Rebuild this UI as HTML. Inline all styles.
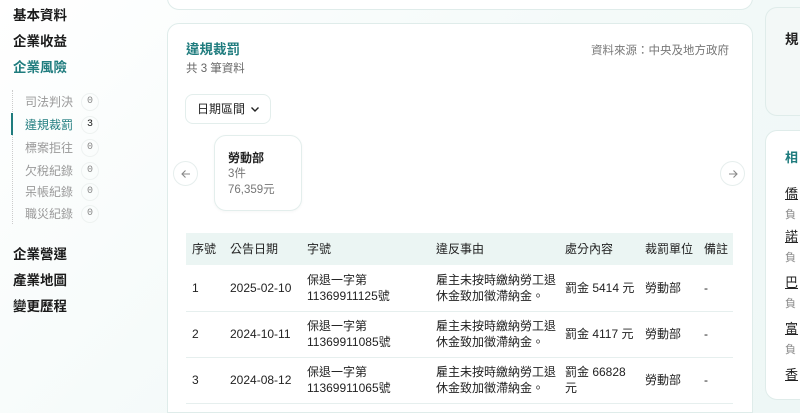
<!DOCTYPE html>
<html style="width:800px;height:413px;overflow:hidden"><head><meta charset="utf-8"><style>
*{margin:0;padding:0;box-sizing:border-box}
body{width:800px;height:413px;overflow:hidden;font-family:"Liberation Sans","Noto Sans CJK TC",sans-serif;background:linear-gradient(135deg,#fff 0%,#f4faf9 50%,#eef7f6 100%);position:relative;color:#222}
.a{position:absolute}
.nav{font-size:13.5px;font-weight:bold;color:#1a1a1a;left:13px;line-height:16px}
.sub{left:25px;font-size:12px;color:#999;line-height:14px}
.cnt{position:absolute;left:56px;top:-2px;width:18px;height:18px;border-radius:9px;border:1px solid #eef2f1;font-size:10px;text-align:center;line-height:16px;color:#888;font-family:"Liberation Mono",monospace}
.card{background:#fff;border:1px solid #dfecea;border-radius:12px}
table{border-collapse:collapse;font-size:12px;color:#222}
td,th{text-align:left;font-weight:normal;padding:0 0 0 6px;vertical-align:middle;line-height:16px}
th{height:32px;background:#ebf5f3}
td{height:46px;border-bottom:1px solid #e6efee}
</style></head><body>
<div class="a nav" style="top:8px">基本資料</div>
<div class="a nav" style="top:34px">企業收益</div>
<div class="a nav" style="top:60px;color:#1f7c7e">企業風險</div>
<div class="a" style="left:12px;top:90px;width:1px;height:134px;border-left:1px dotted #ccc"></div>
<div class="a" style="left:11px;top:113px;width:2px;height:22px;background:#1f7c7e"></div>
<div class="a sub" style="top:95px">司法判決<span class="cnt">0</span></div>
<div class="a sub" style="top:118px;color:#1f7c7e">違規裁罰<span class="cnt" style="color:#222">3</span></div>
<div class="a sub" style="top:141px">標案拒往<span class="cnt">0</span></div>
<div class="a sub" style="top:164px">欠稅紀錄<span class="cnt">0</span></div>
<div class="a sub" style="top:185px">呆帳紀錄<span class="cnt">0</span></div>
<div class="a sub" style="top:207px">職災紀錄<span class="cnt">0</span></div>
<div class="a nav" style="top:247px">企業營運</div>
<div class="a nav" style="top:273px">產業地圖</div>
<div class="a nav" style="top:299px">變更歷程</div>

<div class="a card" style="left:167px;top:-20px;width:586px;height:30px"></div>
<div class="a card" style="left:167px;top:23px;width:586px;height:390px;border-bottom-left-radius:0;border-bottom-right-radius:0"></div>
<div class="a" style="left:186px;top:42px;font-size:13.5px;font-weight:bold;color:#1f7c7e;line-height:16px">違規裁罰</div>
<div class="a" style="left:186px;top:62px;font-size:11.5px;color:#666;line-height:14px">共 3 筆資料</div>
<div class="a" style="left:591px;top:44px;font-size:11.5px;color:#777;line-height:14px">資料來源：中央及地方政府</div>
<div class="a" style="left:185px;top:94px;width:86px;height:30px;border:1px solid #e3eeec;border-radius:8px;font-size:12px;padding:7px 0 0 11px;line-height:15px">日期區間
<svg class="a" style="left:64px;top:11px" width="10" height="7" viewBox="0 0 10 7"><path d="M1.5 1.5L5 5l3.5-3.5" fill="none" stroke="#222" stroke-width="1.4"/></svg></div>
<div class="a" style="left:214px;top:135px;width:88px;height:76px;border:1px solid #e3eeec;border-radius:12px;background:#fff;box-shadow:0 1px 3px rgba(0,0,0,.04)"></div>
<div class="a" style="left:228px;top:151px;font-size:12px;font-weight:bold;line-height:14px">勞動部</div>
<div class="a" style="left:228px;top:167px;font-size:11.5px;color:#777;line-height:14px">3件</div>
<div class="a" style="left:228px;top:183px;font-size:11.5px;color:#777;line-height:14px">76,359元</div>
<div class="a" style="left:173px;top:161px;width:25px;height:25px;border-radius:13px;border:1px solid #e6eeed;background:#fff"><svg class="a" style="left:7px;top:7px" width="10" height="10" viewBox="0 0 10 10"><path d="M9 5H1M4.5 1.5L1 5l3.5 3.5" fill="none" stroke="#888" stroke-width="1.1"/></svg></div>
<div class="a" style="left:720px;top:161px;width:25px;height:25px;border-radius:13px;border:1px solid #e6eeed;background:#fff"><svg class="a" style="left:7px;top:7px" width="10" height="10" viewBox="0 0 10 10"><path d="M1 5h8M5.5 1.5L9 5 5.5 8.5" fill="none" stroke="#888" stroke-width="1.1"/></svg></div>

<table class="a" style="left:186px;top:233px;width:547px">
<tr><th style="width:38px">序號</th><th style="width:77px">公告日期</th><th style="width:129px">字號</th><th style="width:129px">違反事由</th><th style="width:80px">處分內容</th><th style="width:59px">裁罰單位</th><th>備註</th></tr>
<tr><td>1</td><td>2025-02-10</td><td>保退一字第<br>11369911125號</td><td>雇主未按時繳納勞工退<br>休金致加徵滯納金。</td><td>罰金 5414 元</td><td>勞動部</td><td>-</td></tr>
<tr><td>2</td><td>2024-10-11</td><td>保退一字第<br>11369911085號</td><td>雇主未按時繳納勞工退<br>休金致加徵滯納金。</td><td>罰金 4117 元</td><td>勞動部</td><td>-</td></tr>
<tr><td>3</td><td>2024-08-12</td><td>保退一字第<br>11369911065號</td><td>雇主未按時繳納勞工退<br>休金致加徵滯納金。</td><td>罰金 66828<br>元</td><td>勞動部</td><td>-</td></tr>
</table>

<div class="a card" style="left:765px;top:7px;width:35px;height:109px;background:#f3f8f7;border-top-right-radius:0;border-bottom-right-radius:0;border-right:none"></div>
<div class="a" style="left:785px;top:28px;font-size:13.5px;font-weight:bold">規</div>
<div class="a card" style="left:765px;top:130px;width:35px;height:270px;border-top-right-radius:0;border-bottom-right-radius:0;border-right:none"></div>
<div class="a" style="left:785px;top:147px;font-size:13px;font-weight:bold;color:#1f7c7e">相</div>
<div class="a" style="left:785px;top:183px;font-size:13px;text-decoration:underline">僑</div>
<div class="a" style="left:785px;top:206px;font-size:11px;color:#888">負</div>
<div class="a" style="left:785px;top:226px;font-size:13px;text-decoration:underline">諾</div>
<div class="a" style="left:785px;top:249px;font-size:11px;color:#888">負</div>
<div class="a" style="left:785px;top:272px;font-size:13px;text-decoration:underline">巴</div>
<div class="a" style="left:785px;top:295px;font-size:11px;color:#888">負</div>
<div class="a" style="left:785px;top:318px;font-size:13px;text-decoration:underline">富</div>
<div class="a" style="left:785px;top:341px;font-size:11px;color:#888">負</div>
<div class="a" style="left:785px;top:364px;font-size:13px;text-decoration:underline">香</div>
</body></html>
